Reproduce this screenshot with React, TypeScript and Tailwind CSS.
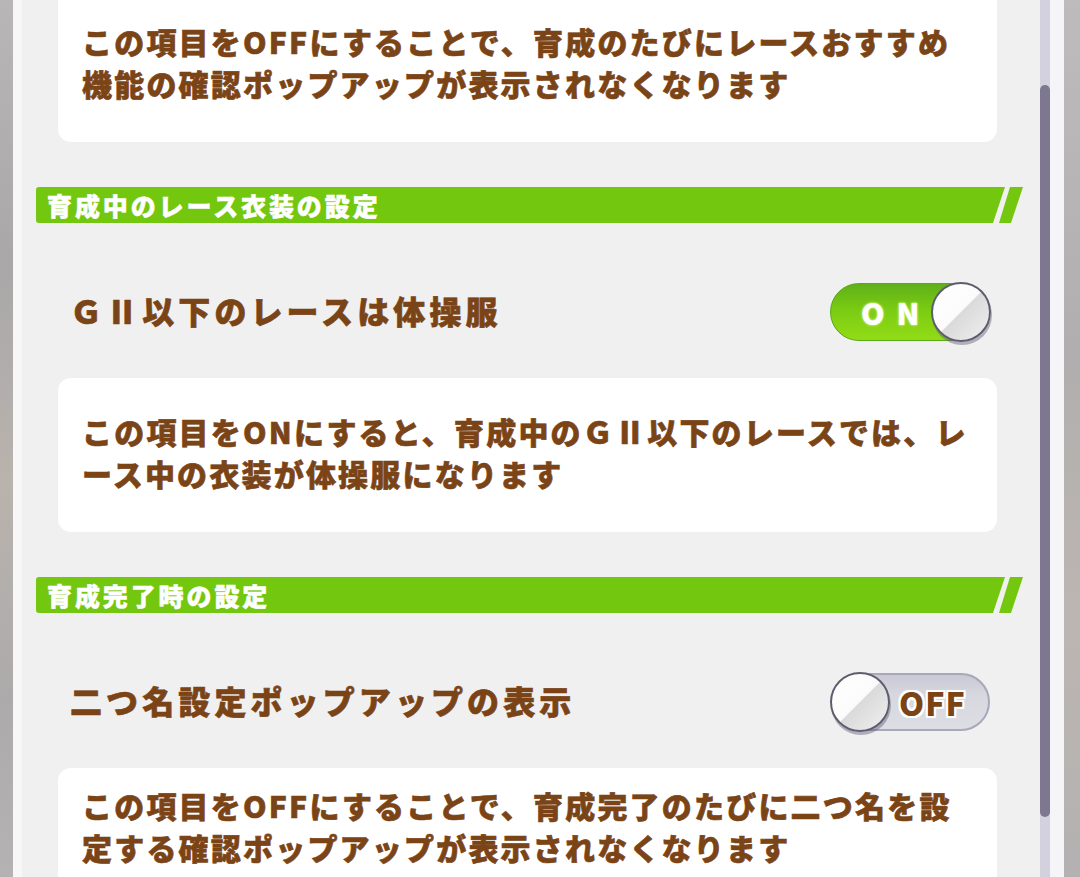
import React from "react";

const brown = "text-[#7a4417] [-webkit-text-stroke:0.6px_#7a4417]";

function SectionHeader({ title }: { title: string }) {
  return (
    <div className="flex h-[36px] items-stretch">
      <div className="flex w-[969px] items-center rounded-l-[3px] bg-[#74c70f] pl-[11px] [clip-path:polygon(0_0,100%_0,calc(100%-12px)_100%,0_100%)]">
        <span className="text-[25px] leading-none font-black tracking-[2.9px] text-white [-webkit-text-stroke:0.5px_#ffffff]">
          {title}
        </span>
      </div>
      <div className="ml-[-6px] w-[24px] bg-[#74c70f] [clip-path:polygon(11px_0,24px_0,12px_100%,0_100%)]" />
    </div>
  );
}

function Knob() {
  return (
    <div className="h-[60px] w-[60px] shrink-0 rounded-full border-[2px] border-[#5e5d6e] bg-[linear-gradient(135deg,#ffffff_0%,#fbfbfb_49%,#dadada_51%,#f0f0f0_100%)] shadow-[1px_3px_0_rgba(95,93,120,0.45)]" />
  );
}

function Toggle({ on }: { on: boolean }) {
  if (on) {
    return (
      <div className="relative flex h-[60px] w-[160px] items-center">
        <div className="absolute left-0 top-[1px] h-[58px] w-[150px] rounded-full border border-[#5aa915] bg-[linear-gradient(180deg,#5fb019_0%,#7acb12_45%,#92dc16_100%)]" />
        <span className="relative ml-[31px] w-[70px] text-[30px] leading-none font-black tracking-[12px] text-white [text-shadow:0_0_3px_#c6f27c,0_0_2px_#c6f27c]">
          ON
        </span>
        <div className="relative ml-auto">
          <Knob />
        </div>
      </div>
    );
  }
  return (
    <div className="relative flex h-[60px] w-[160px] items-center">
      <div className="absolute right-0 top-[1px] h-[58px] w-[150px] rounded-full border-[2px] border-[#a9a8ba] bg-[linear-gradient(180deg,#c9c8d4_0%,#d7d7df_35%,#dddde4_100%)]" />
      <div className="relative">
        <Knob />
      </div>
      <span className="relative ml-[9px] text-[32px] leading-none font-black tracking-[1px] text-[#7a4417] [text-shadow:2px_0_0_#fff,-2px_0_0_#fff,0_2px_0_#fff,0_-2px_0_#fff,2px_2px_0_#fff,-2px_-2px_0_#fff,2px_-2px_0_#fff,-2px_2px_0_#fff]">
        OFF
      </span>
    </div>
  );
}

function Card({ lines, className = "" }: { lines: string[]; className?: string }) {
  return (
    <div className={`ml-[22px] w-[939px] rounded-[13px] bg-white pl-[24px] ${className}`}>
      {lines.map((l) => (
        <p
          key={l}
          className={`whitespace-nowrap text-[30px] leading-[42px] font-black tracking-[2.2px] ${brown}`}
        >
          {l}
        </p>
      ))}
    </div>
  );
}

function SettingRow({ title, on }: { title: string; on: boolean }) {
  return (
    <div className="mt-[59px] flex h-[60px] items-center justify-between pl-[34px] pr-[50px]">
      <span className={`mb-[5px] text-[32px] leading-none font-black tracking-[4.1px] ${brown}`}>
        {title}
      </span>
      <Toggle on={on} />
    </div>
  );
}

export default function App() {
  return (
    <div className="flex h-[877px] w-[1080px] overflow-hidden bg-[#f0f0f0] font-['Noto_Sans_CJK_JP',sans-serif]">
      <div className="w-[13px] shrink-0 bg-[linear-gradient(180deg,#b8b6b6_0%,#a9a7a8_30%,#b9b3ad_55%,#acaaaa_80%,#b4b2b3_100%)]" />
      <div className="w-[9px] shrink-0 bg-[#f7f7f8]" />
      <div className="flex w-[1018px] shrink-0 flex-col pl-[14px]">
        <Card
          className="mt-[-12px] pt-[32px] pb-[38px]"
          lines={[
            "この項目をOFFにすることで、育成のたびにレースおすすめ",
            "機能の確認ポップアップが表示されなくなります",
          ]}
        />
        <div className="mt-[45px]">
          <SectionHeader title="育成中のレース衣装の設定" />
        </div>
        <SettingRow title="ＧⅡ以下のレースは体操服" on />
        <Card
          className="mt-[36px] pt-[32px] pb-[38px]"
          lines={[
            "この項目をONにすると、育成中のＧⅡ以下のレースでは、レ",
            "ース中の衣装が体操服になります",
          ]}
        />
        <div className="mt-[45px]">
          <SectionHeader title="育成完了時の設定" />
        </div>
        <SettingRow title="二つ名設定ポップアップの表示" on={false} />
        <Card
          className="mt-[36px] pt-[16px] pb-[38px]"
          lines={[
            "この項目をOFFにすることで、育成完了のたびに二つ名を設",
            "定する確認ポップアップが表示されなくなります",
          ]}
        />
      </div>
      <div className="flex w-[10px] shrink-0 flex-col bg-[#d2d1dd]">
        <div className="mt-[85px] h-[732px] rounded-full bg-[#7d788f]" />
      </div>
      <div className="w-[14px] shrink-0 bg-[#f5f5f7]" />
      <div className="w-[16px] shrink-0 bg-[linear-gradient(180deg,#bdbbbb_0%,#b0aeae_40%,#bcb6b2_70%,#b3b1b1_100%)]" />
    </div>
  );
}
